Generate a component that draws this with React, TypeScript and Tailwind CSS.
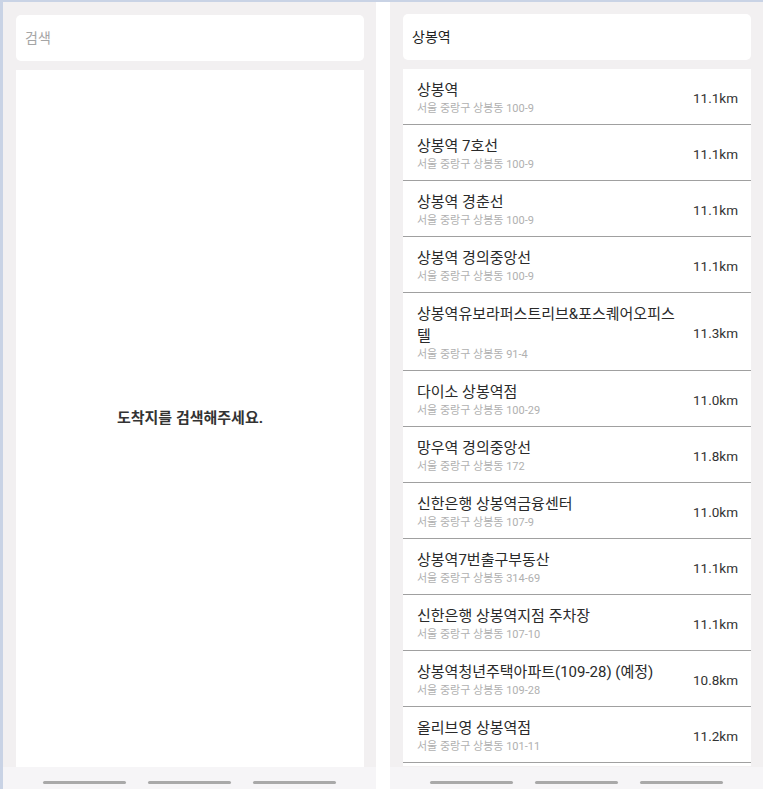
import React from "react";

const items: [string, string, string][] = [
  ["상봉역", "서울 중랑구 상봉동 100-9", "11.1km"],
  ["상봉역 7호선", "서울 중랑구 상봉동 100-9", "11.1km"],
  ["상봉역 경춘선", "서울 중랑구 상봉동 100-9", "11.1km"],
  ["상봉역 경의중앙선", "서울 중랑구 상봉동 100-9", "11.1km"],
  ["상봉역유보라퍼스트리브&포스퀘어오피스텔", "서울 중랑구 상봉동 91-4", "11.3km"],
  ["다이소 상봉역점", "서울 중랑구 상봉동 100-29", "11.0km"],
  ["망우역 경의중앙선", "서울 중랑구 상봉동 172", "11.8km"],
  ["신한은행 상봉역금융센터", "서울 중랑구 상봉동 107-9", "11.0km"],
  ["상봉역7번출구부동산", "서울 중랑구 상봉동 314-69", "11.1km"],
  ["신한은행 상봉역지점 주차장", "서울 중랑구 상봉동 107-10", "11.1km"],
  ["상봉역청년주택아파트(109-28) (예정)", "서울 중랑구 상봉동 109-28", "10.8km"],
  ["올리브영 상봉역점", "서울 중랑구 상봉동 101-11", "11.2km"],
];

function NavStrip() {
  return (
    <div className="h-[22px] shrink-0 bg-[#f6f5f7] flex items-start justify-center gap-[22px] pt-[14px]">
      <div className="w-[83px] h-[3px] rounded-full bg-[#a9a9a9]" />
      <div className="w-[83px] h-[3px] rounded-full bg-[#a9a9a9]" />
      <div className="w-[83px] h-[3px] rounded-full bg-[#a9a9a9]" />
    </div>
  );
}

export default function App() {
  return (
    <div className="w-[763px] h-[789px] bg-white flex flex-col overflow-hidden font-['Roboto','Noto_Sans_CJK_KR',sans-serif]">
      <div className="h-[2px] shrink-0 bg-[#c9d3e5]" />
      <div className="flex flex-1 min-h-0">
        {/* Left panel */}
        <div className="w-[376px] shrink-0 border-l-[3px] border-[#c9d3e5] bg-[#f2f0f1] flex flex-col">
          <div className="flex-1 min-h-0 flex flex-col pt-[13px] pl-[13px] pr-[12px]">
            <div className="h-[46px] shrink-0 bg-white rounded-[5px] flex items-center px-[9px]">
              <span className="text-[14px] text-[#a5a5a5]">검색</span>
            </div>
            <div className="mt-[9px] flex-1 bg-white flex items-center justify-center">
              <span className="text-[15px] font-bold text-[#333333]">도착지를 검색해주세요.</span>
            </div>
          </div>
          <NavStrip />
        </div>
        <div className="w-[14px] shrink-0 bg-white" />
        {/* Right panel */}
        <div className="w-[373px] shrink-0 bg-[#f2f0f1] flex flex-col">
          <div className="flex-1 min-h-0 flex flex-col pt-[12px] pl-[13px] pr-[12px] pb-[1px]">
            <div className="h-[46px] shrink-0 bg-white rounded-[5px] flex items-center px-[9px]">
              <span className="text-[14px] text-[#222222]">상봉역</span>
            </div>
            <div className="mt-[9px] flex-1 min-h-0 bg-white overflow-hidden">
              {items.map(([title, addr, dist], i) => (
                <div
                  key={i}
                  className="flex items-center border-b border-[#a0a0a0] pl-[14px] pr-[13px] pt-[10px] pb-[7px] gap-[12px]"
                >
                  <div className="flex-1 min-w-0">
                    <div className="text-[15px] leading-[22px] text-[#2a2a2a] break-all">{title}</div>
                    <div className="text-[11px] leading-[16px] text-[#b0b0b0]">{addr}</div>
                  </div>
                  <div className="text-[13.5px] text-[#333333] shrink-0">{dist}</div>
                </div>
              ))}
            </div>
          </div>
          <NavStrip />
        </div>
      </div>
    </div>
  );
}
